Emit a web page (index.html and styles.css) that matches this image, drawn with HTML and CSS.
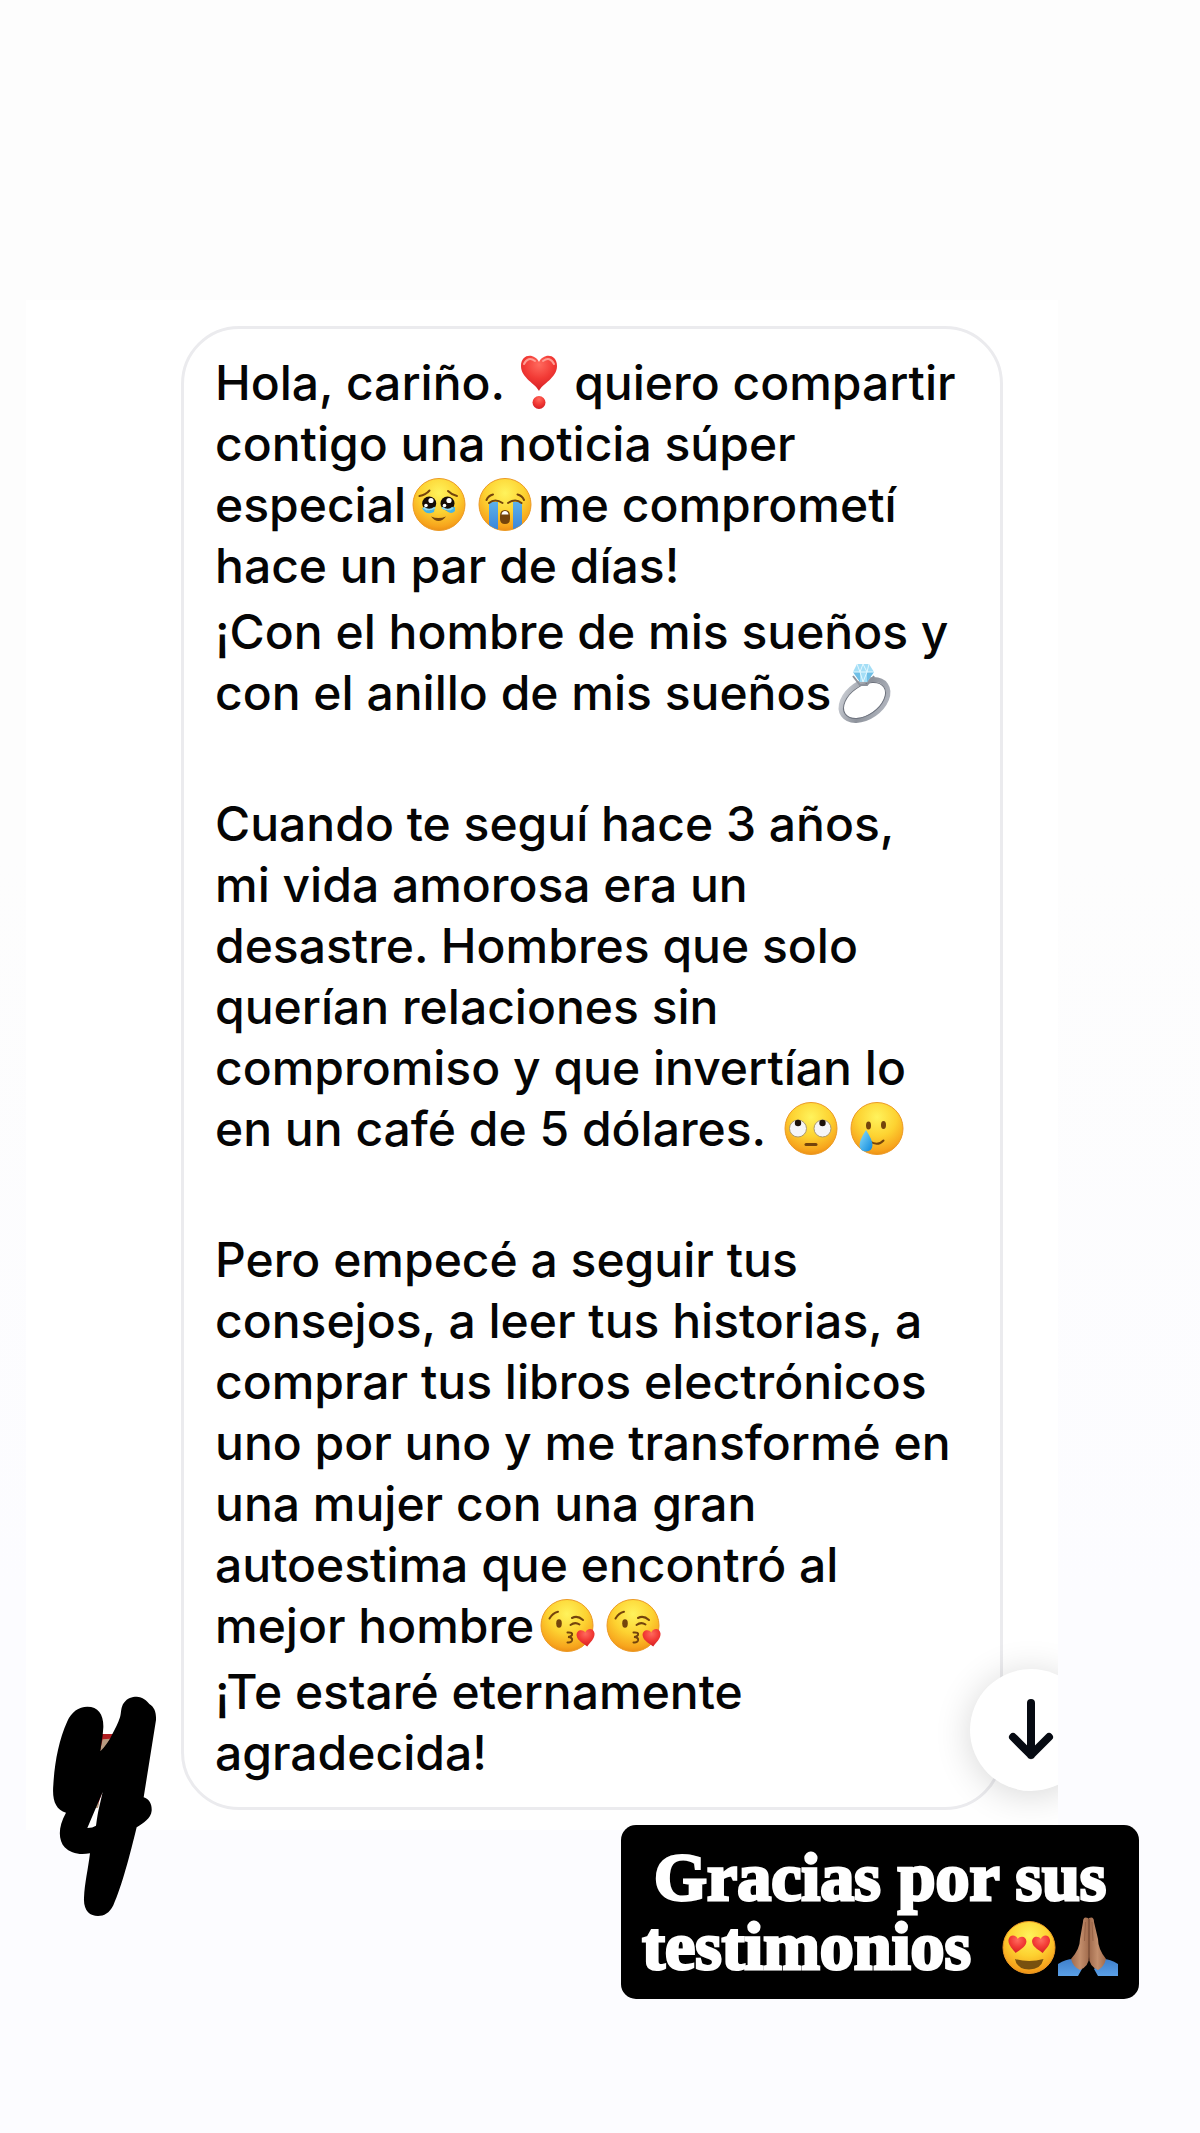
FILE: index.html
```html
<!DOCTYPE html>
<html lang="es">
<head>
    <meta charset="UTF-8">
    <meta name="viewport" content="width=device-width, initial-scale=1.0">
    <title>Testimonios</title>
    <link rel="stylesheet" href="styles.css">
</head>
<body>
    <!-- Emojis -->
    <svg class="defs" width="0" height="0" aria-hidden="true">
        <defs>
            <radialGradient id="skin" cx="0.5" cy="0.28" r="0.75">
                <stop offset="0" stop-color="#fff35c"/>
                <stop offset="0.5" stop-color="#fdd231"/>
                <stop offset="0.85" stop-color="#f7a51d"/>
                <stop offset="1" stop-color="#ea8a12"/>
            </radialGradient>
            <radialGradient id="red" cx="0.5" cy="0.25" r="0.8">
                <stop offset="0" stop-color="#ff6a5e"/>
                <stop offset="0.5" stop-color="#f23a35"/>
                <stop offset="1" stop-color="#cf1b22"/>
            </radialGradient>
            <linearGradient id="tear" x1="0" y1="0" x2="0" y2="1">
                <stop offset="0" stop-color="#5cb0ea"/>
                <stop offset="1" stop-color="#3a84d8"/>
            </linearGradient>
            <linearGradient id="drop" x1="0" y1="0" x2="1" y2="1">
                <stop offset="0" stop-color="#8fe0fb"/>
                <stop offset="1" stop-color="#0a86dd"/>
            </linearGradient>
            <linearGradient id="metal" x1="0" y1="0" x2="1" y2="1">
                <stop offset="0" stop-color="#d5d8de"/>
                <stop offset="0.5" stop-color="#8d929b"/>
                <stop offset="1" stop-color="#b9bdc6"/>
            </linearGradient>
            <linearGradient id="sleeve" x1="0" y1="0" x2="0" y2="1">
                <stop offset="0" stop-color="#3f7fcb"/>
                <stop offset="1" stop-color="#5a9fe6"/>
            </linearGradient>
            <linearGradient id="hand" x1="0" y1="0" x2="1" y2="0">
                <stop offset="0" stop-color="#a06a4c"/>
                <stop offset="0.5" stop-color="#c48f6d"/>
                <stop offset="1" stop-color="#a06a4c"/>
            </linearGradient>
            <clipPath id="round"><circle cx="33" cy="26.5" r="26"/></clipPath>
            <circle id="face" cx="33" cy="26.5" r="26" fill="url(#skin)" stroke="#ec9a25" stroke-width="1"/>
            <path id="heart" d="M0 9C-3 6-9 2-9-3C-9-9-2-9.500 0-5C2-9.500 9-9 9-3C9 2 3 6 0 9Z" fill="url(#red)"/>
            <g id="kiss">
                <use href="#face"/>
                <g fill="none" stroke="#74440c" stroke-width="2" stroke-linecap="round">
                    <path d="M15.500 19.500Q18.500 14 24 12.700M38 19Q43.500 16 49 21M36.500 26Q41 22.500 45.500 25.500"/>
                    <path d="M33.500 33.500Q39 33 38 36Q37 38 34 38Q39 38.500 38 41.500Q37 44 33.500 43.500"/>
                </g>
                <ellipse cx="25" cy="24.500" rx="2.800" ry="4.200" fill="#74440c"/>
                <use href="#heart" transform="translate(52 38.500) rotate(-8)"/>
            </g>
        </defs>
    </svg>

    <main class="story">
        <section class="chat">
            <article class="bubble">
                <p>Hola, cariño. <svg class="emoji narrow" viewBox="0 0 36 53" role="img" aria-label="exclamación de corazón"><path d="M18 35C15 28 0 22 0 10C0-3 14-3 18 6C22-3 36-3 36 10C36 22 21 28 18 35Z" fill="url(#red)"/><path d="M3 8Q7 0 14 5M22 5Q29 0 33 8" fill="none" stroke="#ff9e94" stroke-width="2" stroke-linecap="round"/><circle cx="18" cy="46.500" r="6.500" fill="url(#red)"/></svg> quiero compartir<br>
                contigo una noticia súper<br>
                especial<svg class="emoji" viewBox="0 0 66 53" role="img" aria-label="cara emocionada"><use href="#face"/><path d="M16 30Q20 38 28 34L29 29ZM38 30Q44 38 49 33L49 29Z" fill="#45b5e6"/><circle cx="23.200" cy="25.500" r="7" fill="#160d08"/><circle cx="41.500" cy="25.500" r="7" fill="#160d08"/><g fill="#fff"><circle cx="25" cy="22.500" r="2.600"/><circle cx="43" cy="22.500" r="2.600"/><circle cx="20" cy="27.500" r="1.800"/><circle cx="38.500" cy="27.500" r="1.800"/></g><path d="M17.500 29.500Q23 34 29 29.500M36 29.500Q42 34 47 29.500" fill="none" stroke="#8ed8f2" stroke-width="2"/><path d="M13.500 18Q19.500 17 23.500 12.500M42 13Q46 17 51 18" fill="none" stroke="#74440c" stroke-width="2" stroke-linecap="round"/><path d="M25 38.500Q32.500 41.500 40 38.500Q32.500 47.500 25 38.500Z" fill="#74440c"/></svg><svg class="emoji" viewBox="0 0 66 53" role="img" aria-label="cara llorando"><use href="#face"/><g clip-path="url(#round)"><path d="M17 24H26V53H17ZM41 24H50V53H41Z" fill="url(#tear)"/></g><path d="M14.500 22Q16.500 17.500 21 16.500M45.500 16.500Q50 17.500 52 22M17 25Q23 20 30.500 25M36 25Q43.500 20 49.500 25" fill="none" stroke="#74440c" stroke-width="2" stroke-linecap="round"/><path d="M28 38Q28 32 33 32Q38 32 38 38V41Q38 46 33 46Q28 46 28 41Z" fill="#74440c"/><path d="M29.500 36.500Q30 33 33 33Q36 33 36.500 36.500Z" fill="#fff"/></svg>me comprometí<br>
                hace un par de días!</p>
                <p>¡Con el hombre de mis sueños y<br>
                con el anillo de mis sueños<svg class="emoji" viewBox="0 0 66 53" role="img" aria-label="anillo"><ellipse cx="33.500" cy="34" rx="26" ry="17" transform="rotate(-35 33.500 34)" fill="none" stroke="url(#metal)" stroke-width="5"/><ellipse cx="33.500" cy="34.500" rx="23.500" ry="14.500" transform="rotate(-35 33.500 34.500)" fill="none" stroke="#6d727d" stroke-width="1"/><g transform="translate(0 2)"><path d="M22 8L29 17H36L43 8" fill="none" stroke="#8d929b" stroke-width="2"/><path d="M26-4H38L43 4L36 14H29L22 4Z" fill="#a4def6"/><path d="M22 4L29 14L29 4ZM36 4L36 14L43 4Z" fill="#6fbfe6"/><path d="M22 4H43M26-4L29 4L32-4L36 4L38-4M29 4L32 14L36 4" fill="none" stroke="#e4f8ff" stroke-width="1"/></g></svg></p>
                <p class="blank"></p>
                <p>Cuando te seguí hace 3 años,<br>
                mi vida amorosa era un<br>
                desastre. Hombres que solo<br>
                querían relaciones sin<br>
                compromiso y que invertían lo<br>
                en un café de 5 dólares. <svg class="emoji" viewBox="0 0 66 53" role="img" aria-label="ojos en blanco"><use href="#face"/><g fill="#f6f6f8" stroke="#ac9a70" stroke-width="1"><circle cx="20" cy="26.500" r="8.500"/><circle cx="44.500" cy="26.500" r="8.500"/></g><circle cx="20" cy="21" r="3.200" fill="#1c120b"/><circle cx="44.500" cy="21" r="3.200" fill="#1c120b"/><path d="M28 42.500H38" stroke="#74440c" stroke-width="3" stroke-linecap="round"/></svg><svg class="emoji" viewBox="0 0 66 53" role="img" aria-label="sonrisa con lágrima"><use href="#face"/><g fill="#74440c"><ellipse cx="24.500" cy="23.500" rx="2.500" ry="4"/><ellipse cx="39.500" cy="23" rx="2.500" ry="4"/></g><path d="M26 39.500Q34 44.500 39.500 38.500" fill="none" stroke="#74440c" stroke-width="2" stroke-linecap="round"/><path d="M22 28Q28.500 38 28.500 43Q28 49.500 22 49.500Q16 49.500 15.500 43Q15.500 38 22 28Z" fill="url(#drop)"/></svg></p>
                <p class="blank"></p>
                <p>Pero empecé a seguir tus<br>
                consejos, a leer tus historias, a<br>
                comprar tus libros electrónicos<br>
                uno por uno y me transformé en<br>
                una mujer con una gran<br>
                autoestima que encontró al<br>
                mejor hombre<svg class="emoji" viewBox="0 0 66 53" role="img" aria-label="beso"><use href="#kiss"/></svg><svg class="emoji" viewBox="0 0 66 53" role="img" aria-label="beso"><use href="#kiss"/></svg></p>
                <p>¡Te estaré eternamente<br>
                agradecida!</p>
            </article>
            <button class="scroll-down" type="button" aria-label="Bajar">
                <svg viewBox="0 0 122 122" aria-hidden="true"><path d="M61 34V86M43 68L61 86L79 68" fill="none" stroke="#060a12" stroke-width="8" stroke-linecap="round" stroke-linejoin="round"/></svg>
            </button>
        </section>

        <h1 class="caption">Gracias por sus<br>testimonios <svg class="emoji love" viewBox="6 0 54 53" role="img" aria-label="ojos de corazón"><use href="#face"/><use href="#heart" transform="translate(21 23) rotate(8)"/><use href="#heart" transform="translate(45.500 23) rotate(-8)"/><path d="M19 38Q33 42 47.500 38Q45 48.500 33 48.500Q21 48.500 19 38Z" fill="#78500f"/></svg><svg class="emoji pray" viewBox="0 0 60 59" role="img" aria-label="manos juntas"><path d="M0 47Q8 42 15 42L24 52L20 59H0ZM60 47Q52 42 45 42L36 52L40 59H60Z" fill="url(#sleeve)"/><path d="M30 1Q25-1 25 5L22 22Q22 32 13 42Q15 50 22 53Q31 49 31 40V2Z" fill="url(#hand)"/><path d="M31 1Q36-1 36 5L40 22Q40 32 48 42Q46 50 40 53Q31 49 31 40V2Z" fill="url(#hand)"/><path d="M31 2V44" stroke="#6b412c" stroke-width="1"/><path d="M27.500 5L26.500 24M34 5L35 24" stroke="#986347" stroke-width="1"/></svg></h1>

        <!-- Trazo a mano -->
        <svg class="scribble" viewBox="0 0 540 810" aria-hidden="true">
            <path d="M216 192H250L240 230L208 250ZM218 364L200 414L190 408L204 372Z" fill="#b01d20"/>
            <path d="M218 208L240 206L228 232L208 250ZM196 400L208 398L204 414L192 414Z" fill="#b89a80"/>
            <path fill-rule="evenodd" d="M172 110C205 110 221 134 220 172L218 196L211 244C226 228 238 212 246 194C256 176 264 160 270 142C274 130 272 110 282 98C292 84 306 80 320 80C338 80 350 92 358 102C374 112 379 128 378 150L341 382C358 388 366 402 365 422C363 446 340 458 320 472C300 555 275 650 250 706C238 730 222 738 204 738C180 738 160 722 162 684C164 638 174 600 180 550C148 556 122 550 104 532C84 510 84 470 108 428C76 418 66 390 70 344C74 278 86 212 112 154C124 126 146 110 172 110ZM218 366L172 474Q188 474 198 467Q203 430 207 414Z"/>
        </svg>
    </main>
</body>
</html>
```

FILE: styles.css
```css
* { box-sizing: border-box; }

body {
    margin: 0;
    font-family: Inter, "Liberation Sans", sans-serif;
    color: #050505;
    background-color: #fcfcff;
}
p, h1 { margin: 0; }
.defs { position: absolute; }

.story {
    position: relative;
    display: flex;
    flex-direction: column;
    min-height: 100vh;
    padding-top: 300px;
    background: linear-gradient(#fdfdfd, #fdfdfd 40%, #fcfcff 75%);
}

/* Mensaje */
.chat {
    position: relative;
    overflow: hidden;
    margin: 0 142px 0 26px;
    padding: 26px 55px 20px 155px;
    background-color: #fff;
}
.bubble {
    display: flex;
    flex-direction: column;
    gap: 5px;
    padding: 23px 20px 24px 31px;
    border: 3px solid #ebebee;
    border-radius: 58px;
    font-size: 48px;
    font-weight: 550;
    line-height: 61px;
    white-space: nowrap;
}
.blank { height: 60px; }
.emoji {
    width: 66px;
    height: 53px;
    vertical-align: -9px;
    overflow: visible;
}
.narrow { width: 44px; }

.scroll-down {
    position: absolute;
    right: -34px;
    bottom: 39px;
    width: 122px;
    height: 122px;
    padding: 0;
    border: none;
    border-radius: 50%;
    background-color: #fff;
    box-shadow: 0 4px 36px rgba(0, 0, 0, 0.16);
    cursor: pointer;
}
.scroll-down svg { display: block; }

/* Etiqueta negra */
.caption {
    z-index: 1;
    align-self: flex-end;
    margin: -5px 61px 0 0;
    padding: 18px 21px;
    border-radius: 15px;
    background-color: #000;
    color: #fff;
    font-family: "Liberation Serif", serif;
    font-size: 68px;
    font-weight: 700;
    line-height: 69px;
    text-align: center;
    -webkit-text-stroke: 3px #fff;
}
.love { width: 54px; margin-left: 14px; vertical-align: -5px; }
.pray { width: 60px; height: 59px; margin-left: 2px; vertical-align: -7px; }

.scribble {
    position: absolute;
    left: 30px;
    top: 1670px;
    width: 180px;
    height: 270px;
}
```
